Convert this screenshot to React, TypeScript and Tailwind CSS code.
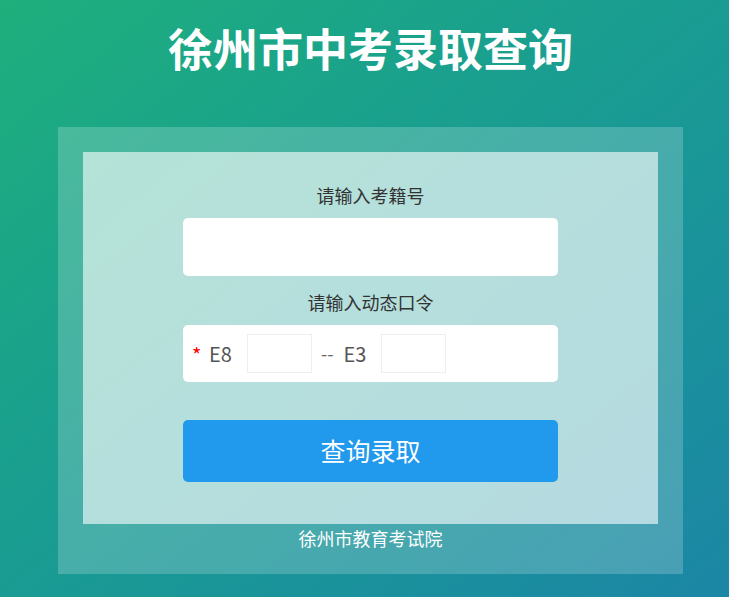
const font = { fontFamily: '"Noto Sans CJK SC", "Noto Sans", sans-serif' };

export default function App() {
  return (
    <div
      className="h-[597px] w-full overflow-hidden bg-gradient-to-br from-[#1eaf7c] to-[#1c86a5]"
      style={font}
    >
      <div className="flex flex-col items-center pl-[12px]">
        <h1 className="h-[127px] pt-[14px] text-[45px] font-bold leading-[67px] text-white">
          徐州市中考录取查询
        </h1>

        <div className="w-[625px] bg-white/20 px-[25px] pt-[25px]">
          <div className="flex h-[372px] flex-col items-center bg-white/60 pt-[29px]">
            <label className="h-[28px] text-[18px] leading-[28px] text-[#333]">请输入考籍号</label>
            <input
              type="text"
              className="mt-[9px] h-[58px] w-[375px] rounded-[5px] bg-white px-3 outline-none"
            />

            <label className="mt-[12px] h-[28px] text-[18px] leading-[28px] text-[#333]">
              请输入动态口令
            </label>
            <div className="mt-[9px] flex h-[57px] w-[375px] items-center rounded-[5px] bg-white pl-[9px]">
              <span className="mt-[2px] w-[17px] text-[20px] leading-[20px] text-[#f00]">*</span>
              <span className="text-[20px] text-[#555]">E8</span>
              <input
                type="text"
                className="ml-[15px] h-[39px] w-[65px] border border-[#eee] outline-none"
              />
              <span className="ml-[9px] text-[18px] text-[#666]">--</span>
              <span className="ml-[10px] text-[20px] text-[#555]">E3</span>
              <input
                type="text"
                className="ml-[15px] h-[39px] w-[65px] border border-[#eee] outline-none"
              />
            </div>

            <button
              type="button"
              className="mt-[38px] h-[62px] w-[375px] rounded-[5px] bg-[#2199ec] text-[25px] text-white"
            >
              查询录取
            </button>
          </div>
          <div className="h-[50px] text-center text-[18px] leading-[28px] text-white">
            徐州市教育考试院
          </div>
        </div>
      </div>
    </div>
  );
}
